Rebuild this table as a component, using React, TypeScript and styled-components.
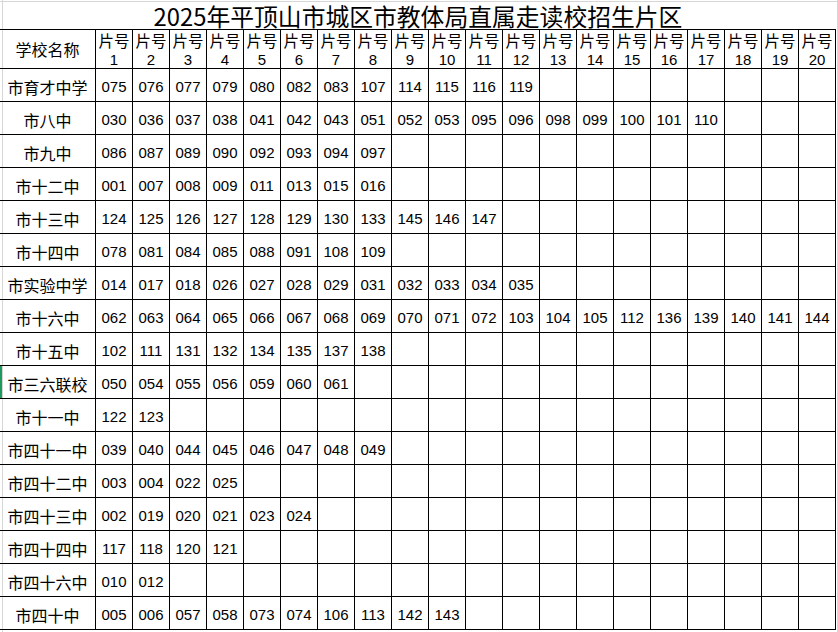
import React from "react";
import styled, { createGlobalStyle } from "styled-components";

const GlobalStyle = createGlobalStyle`
  html, body { margin: 0; padding: 0; background: #ffffff; }
  body { font-family: "Liberation Sans", "Noto Sans CJK SC", sans-serif; color: #000; }
`;

const rows: { name: string; codes: string[]; selected?: boolean }[] = [
  { name: "市育才中学", codes: "075 076 077 079 080 082 083 107 114 115 116 119".split(" ") },
  { name: "市八中", codes: "030 036 037 038 041 042 043 051 052 053 095 096 098 099 100 101 110".split(" ") },
  { name: "市九中", codes: "086 087 089 090 092 093 094 097".split(" ") },
  { name: "市十二中", codes: "001 007 008 009 011 013 015 016".split(" ") },
  { name: "市十三中", codes: "124 125 126 127 128 129 130 133 145 146 147".split(" ") },
  { name: "市十四中", codes: "078 081 084 085 088 091 108 109".split(" ") },
  { name: "市实验中学", codes: "014 017 018 026 027 028 029 031 032 033 034 035".split(" ") },
  { name: "市十六中", codes: "062 063 064 065 066 067 068 069 070 071 072 103 104 105 112 136 139 140 141 144".split(" ") },
  { name: "市十五中", codes: "102 111 131 132 134 135 137 138".split(" ") },
  { name: "市三六联校", codes: "050 054 055 056 059 060 061".split(" "), selected: true },
  { name: "市十一中", codes: "122 123".split(" ") },
  { name: "市四十一中", codes: "039 040 044 045 046 047 048 049".split(" ") },
  { name: "市四十二中", codes: "003 004 022 025".split(" ") },
  { name: "市四十三中", codes: "002 019 020 021 023 024".split(" ") },
  { name: "市四十四中", codes: "117 118 120 121".split(" ") },
  { name: "市四十六中", codes: "010 012".split(" ") },
  { name: "市四十中", codes: "005 006 057 058 073 074 106 113 142 143".split(" ") },
];

const COLS = 20;

const Page = styled.div`
  width: 838px;
  height: 632px;
  overflow: hidden;
  background:
    linear-gradient(#d6d6d6, #d6d6d6) 2px 0 / 1px 100% no-repeat,
    linear-gradient(#d6d6d6, #d6d6d6) 837px 0 / 1px 100% no-repeat,
    linear-gradient(#d6d6d6, #d6d6d6) 0 1px / 100% 1px no-repeat,
    #ffffff;
`;

const Title = styled.div`
  width: 836px;
  height: 29px;
  box-sizing: border-box;
  padding-top: 2px;
  text-align: center;
  font-family: "Noto Sans CJK SC", sans-serif;
  font-size: 23.8px;
  line-height: 27px;
  color: #000;
  white-space: nowrap;
`;

const Sheet = styled.div`
  display: grid;
  grid-template-columns: 96px repeat(${COLS}, 37px);
  grid-template-rows: 39px repeat(${rows.length}, 33px);
  border-top: 1px solid #000;
  width: 836px;
`;

const Cell = styled.div`
  box-sizing: border-box;
  border-right: 1px solid #000;
  border-bottom: 1px solid #000;
  display: flex;
  align-items: center;
  justify-content: center;
  white-space: nowrap;
  overflow: hidden;
`;

const HeaderCell = styled(Cell)`
  flex-direction: column;
  justify-content: flex-start;
  padding-top: 1px;
  line-height: 19px;
`;

const HeaderLabel = styled.span`
  display: block;
  height: 20px;
  font-family: "Noto Sans CJK SC", sans-serif;
  font-size: 15.5px;
`;

const HeaderNum = styled.span`
  display: block;
  height: 17px;
  line-height: 17px;
  font-family: "Liberation Sans", sans-serif;
  font-size: 15px;
`;

const NameHeader = styled(Cell)`
  font-family: "Noto Sans CJK SC", sans-serif;
  font-size: 16px;
`;

const NameCell = styled(Cell)<{ $selected?: boolean }>`
  font-family: "Noto Sans CJK SC", sans-serif;
  font-size: 16px;
  padding-top: 3px;
  box-shadow: ${(p) => (p.$selected ? "inset 2px 0 0 #1f9a5f" : "none")};
`;

const NumCell = styled(Cell)`
  font-family: "Liberation Sans", sans-serif;
  font-size: 15px;
  padding-top: 3px;
`;

export default function App() {
  return (
    <Page>
      <GlobalStyle />
      <Title>2025年平顶山市城区市教体局直属走读校招生片区</Title>
      <Sheet>
        <NameHeader>学校名称</NameHeader>
        {Array.from({ length: COLS }, (_, i) => (
          <HeaderCell key={`h${i}`}>
            <HeaderLabel>片号</HeaderLabel>
            <HeaderNum>{i + 1}</HeaderNum>
          </HeaderCell>
        ))}
        {rows.map((r) => (
          <React.Fragment key={r.name}>
            <NameCell $selected={r.selected}>{r.name}</NameCell>
            {Array.from({ length: COLS }, (_, i) => (
              <NumCell key={`${r.name}-${i}`}>{r.codes[i] ?? ""}</NumCell>
            ))}
          </React.Fragment>
        ))}
      </Sheet>
    </Page>
  );
}
